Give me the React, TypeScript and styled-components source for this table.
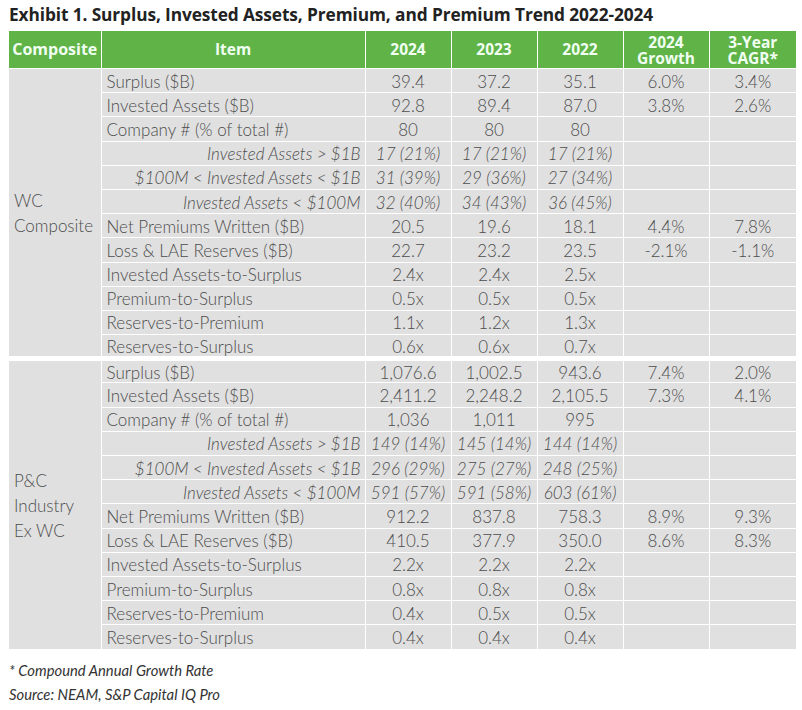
import React from "react";
import styled, { createGlobalStyle } from "styled-components";

const Global = createGlobalStyle`
  body {
    margin: 0;
    background: #ffffff;
    font-family: "Lato", "Open Sans", sans-serif;
  }
`;

const Page = styled.div`
  padding: 4px 6px 0 9px;
  width: 787px;
`;

const Title = styled.h1`
  margin: 0 0 6px 0;
  font-family: "Open Sans", sans-serif;
  font-weight: 700;
  font-size: 17.3px;
  line-height: 21px;
  color: #222222;
  letter-spacing: -0.1px;
  white-space: nowrap;
`;

const Table = styled.table`
  width: 787px;
  table-layout: fixed;
  border-collapse: collapse;
`;

const Head = styled.th`
  background: #5fb347;
  color: #f0fff2;
  font-family: "Open Sans", sans-serif;
  font-weight: 700;
  font-size: 15.5px;
  line-height: 17px;
  height: 37px;
  padding: 0 1px;
  border: 1.5px solid #ffffff;
  border-top: none;
  text-align: center;
  white-space: nowrap;
  &:first-child {
    border-left: none;
    font-size: 16px;
  }
  &:last-child {
    border-right: none;
  }
`;

const HeadLine = styled.span`
  display: block;
  height: 16px;
  line-height: 16px;
`;

const Row = styled.tr<{ $first?: boolean }>`
  height: 24.2px;
  & > td {
    border-top: ${(p) => (p.$first ? "5px" : "1.5px")} solid #ffffff;
  }
`;

const Cell = styled.td<{ $sub?: boolean; $align?: string }>`
  background: #e0e0e0;
  color: #4d4d4d;
  font-weight: 300;
  font-style: ${(p) => (p.$sub ? "italic" : "normal")};
  font-size: 17px;
  line-height: 19px;
  padding: 1px ${(p) => (p.$align === "right" ? "4px" : "5px")} 0 5px;
  text-align: ${(p) => p.$align || "center"};
  border-left: 1.5px solid #ffffff;
  border-right: 1.5px solid #ffffff;
  white-space: nowrap;
  overflow: hidden;
  &:last-child {
    border-right: none;
  }
`;

const GroupCell = styled.td`
  background: #e0e0e0;
  color: #4d4d4d;
  font-weight: 300;
  font-size: 17px;
  line-height: 25px;
  padding: 0 0 0 5px;
  border-right: 1.5px solid #ffffff;
  vertical-align: middle;
  text-align: left;
`;

const Notes = styled.div`
  margin-top: 9px;
  font-family: "Lato", sans-serif;
  font-style: italic;
  font-size: 14.8px;
  color: #333333;
  line-height: 24px;
`;

type R = [string, string, string, string, string?, string?, boolean?];

const wc: R[] = [
  ["Surplus ($B)", "39.4", "37.2", "35.1", "6.0%", "3.4%"],
  ["Invested Assets ($B)", "92.8", "89.4", "87.0", "3.8%", "2.6%"],
  ["Company # (% of total #)", "80", "80", "80"],
  ["Invested Assets > $1B", "17 (21%)", "17 (21%)", "17 (21%)", "", "", true],
  ["$100M < Invested Assets < $1B", "31 (39%)", "29 (36%)", "27 (34%)", "", "", true],
  ["Invested Assets < $100M", "32 (40%)", "34 (43%)", "36 (45%)", "", "", true],
  ["Net Premiums Written ($B)", "20.5", "19.6", "18.1", "4.4%", "7.8%"],
  ["Loss & LAE Reserves ($B)", "22.7", "23.2", "23.5", "-2.1%", "-1.1%"],
  ["Invested Assets-to-Surplus", "2.4x", "2.4x", "2.5x"],
  ["Premium-to-Surplus", "0.5x", "0.5x", "0.5x"],
  ["Reserves-to-Premium", "1.1x", "1.2x", "1.3x"],
  ["Reserves-to-Surplus", "0.6x", "0.6x", "0.7x"],
];

const pc: R[] = [
  ["Surplus ($B)", "1,076.6", "1,002.5", "943.6", "7.4%", "2.0%"],
  ["Invested Assets ($B)", "2,411.2", "2,248.2", "2,105.5", "7.3%", "4.1%"],
  ["Company # (% of total #)", "1,036", "1,011", "995"],
  ["Invested Assets > $1B", "149 (14%)", "145 (14%)", "144 (14%)", "", "", true],
  ["$100M < Invested Assets < $1B", "296 (29%)", "275 (27%)", "248 (25%)", "", "", true],
  ["Invested Assets < $100M", "591 (57%)", "591 (58%)", "603 (61%)", "", "", true],
  ["Net Premiums Written ($B)", "912.2", "837.8", "758.3", "8.9%", "9.3%"],
  ["Loss & LAE Reserves ($B)", "410.5", "377.9", "350.0", "8.6%", "8.3%"],
  ["Invested Assets-to-Surplus", "2.2x", "2.2x", "2.2x"],
  ["Premium-to-Surplus", "0.8x", "0.8x", "0.8x"],
  ["Reserves-to-Premium", "0.4x", "0.5x", "0.5x"],
  ["Reserves-to-Surplus", "0.4x", "0.4x", "0.4x"],
];

function Section({ label, rows, first }: { label: React.ReactNode; rows: R[]; first?: boolean }) {
  return (
    <>
      {rows.map((r, i) => (
        <Row key={i} $first={first && i === 0}>
          {i === 0 && <GroupCell rowSpan={rows.length}>{label}</GroupCell>}
          <Cell $sub={r[6]} $align={r[6] ? "right" : "left"}>
            {r[0]}
          </Cell>
          <Cell $sub={r[6]}>{r[1]}</Cell>
          <Cell $sub={r[6]}>{r[2]}</Cell>
          <Cell $sub={r[6]}>{r[3]}</Cell>
          <Cell>{r[4]}</Cell>
          <Cell>{r[5]}</Cell>
        </Row>
      ))}
    </>
  );
}

export default function App() {
  return (
    <Page>
      <Global />
      <Title>Exhibit 1. Surplus, Invested Assets, Premium, and Premium Trend 2022-2024</Title>
      <Table>
        <colgroup>
          <col style={{ width: 92 }} />
          <col style={{ width: 264 }} />
          <col style={{ width: 86 }} />
          <col style={{ width: 86 }} />
          <col style={{ width: 86 }} />
          <col style={{ width: 86 }} />
          <col style={{ width: 87 }} />
        </colgroup>
        <thead>
          <tr>
            <Head>Composite</Head>
            <Head>Item</Head>
            <Head>2024</Head>
            <Head>2023</Head>
            <Head>2022</Head>
            <Head>
              <HeadLine>2024</HeadLine>
              <HeadLine>Growth</HeadLine>
            </Head>
            <Head>
              <HeadLine>3-Year</HeadLine>
              <HeadLine>CAGR*</HeadLine>
            </Head>
          </tr>
        </thead>
        <tbody>
          <Section
            label={
              <>
                WC
                <br />
                Composite
              </>
            }
            rows={wc}
          />
          <Section
            label={
              <>
                P&amp;C
                <br />
                Industry
                <br />
                Ex WC
              </>
            }
            rows={pc}
            first
          />
        </tbody>
      </Table>
      <Notes>
        * Compound Annual Growth Rate
        <br />
        Source: NEAM, S&amp;P Capital IQ Pro
      </Notes>
    </Page>
  );
}
